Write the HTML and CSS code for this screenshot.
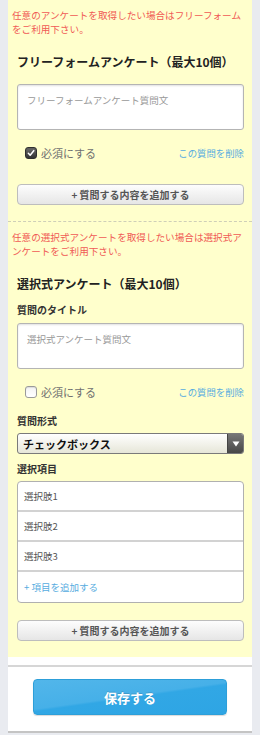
FILE: index.html
```html
<!DOCTYPE html>
<html lang="ja">
<head>
    <meta charset="UTF-8">
    <meta name="viewport" content="width=device-width, initial-scale=1.0">
    <title>アンケート設定</title>
    <link rel="stylesheet" href="styles.css">
</head>
<body>
    <div class="card">
        <section class="enquete">
            <p class="notice">任意のアンケートを取得したい場合はフリーフォームをご利用下さい。</p>
            <h2 class="enquete-title">フリーフォームアンケート（最大10個）</h2>
            <textarea class="question-text" placeholder="フリーフォームアンケート質問文"></textarea>
            <div class="question-opts">
                <label class="required">
                    <span class="check is-checked">
                        <svg width="12" height="12" viewBox="0 0 12 12"><path d="M2.8 6.3 L5 8.6 L9.3 3.2" fill="none" stroke="#fff" stroke-width="1.8" stroke-linecap="round" stroke-linejoin="round"/></svg>
                    </span>
                    必須にする
                </label>
                <a class="delete-link" href="#">この質問を削除</a>
            </div>
            <button class="add-button">+ 質問する内容を追加する</button>
        </section>

        <section class="enquete">
            <p class="notice">任意の選択式アンケートを取得したい場合は選択式アンケートをご利用下さい。</p>
            <h2 class="enquete-title title-tight">選択式アンケート（最大10個）</h2>
            <p class="field-label first">質問のタイトル</p>
            <textarea class="question-text" placeholder="選択式アンケート質問文"></textarea>
            <div class="question-opts">
                <label class="required">
                    <span class="check"></span>
                    必須にする
                </label>
                <a class="delete-link" href="#">この質問を削除</a>
            </div>
            <p class="field-label">質問形式</p>
            <div class="select-box">
                <select class="select-type">
                    <option>チェックボックス</option>
                    <option>ラジオボタン</option>
                </select>
                <span class="select-arrow">
                    <svg width="8" height="6" viewBox="0 0 8 6"><path d="M0.5 0.5 H7.5 L4 5.5 Z" fill="#fff"/></svg>
                </span>
            </div>
            <p class="field-label gap-small">選択項目</p>
            <ul class="choice-list">
                <li>選択肢1</li>
                <li>選択肢2</li>
                <li>選択肢3</li>
                <li class="choice-add">+ 項目を追加する</li>
            </ul>
            <button class="add-button add-last">+ 質問する内容を追加する</button>
        </section>

        <div class="save-area">
            <div class="save-inner">
                <button class="save-button">保存する</button>
            </div>
        </div>
    </div>
</body>
</html>
```

FILE: styles.css
```css
body {
    margin: 0;
    background-color: #e9ebf0;
    font-family: "Noto Sans CJK JP", sans-serif;
    color: #333;
}
.card {
    margin: 0 8px;
    height: 731px;
    background-color: #fff;
    border-bottom: 2px solid #c4c4c4;
}
.enquete {
    background-color: #ffffcc;
    padding: 8px 8px 16px 9px;
}
.enquete + .enquete {
    border-top: 1px dashed #cfcfb8;
}
.notice {
    margin: 0 -2px 0 -5px;
    font-size: 9.6px;
    line-height: 14px;
    color: #f05a55;
}
.enquete-title {
    margin: 18px 0 14px;
    font-size: 12px;
    line-height: 16px;
    font-weight: bold;
    color: #222;
}
.title-tight {
    margin-bottom: 11px;
}
.field-label {
    margin: 12px 0 5px;
    font-size: 10px;
    line-height: 14px;
    font-weight: bold;
    color: #333;
}
.field-label.first {
    margin: 0 0 6px;
}
.field-label.gap-small {
    margin-top: 8px;
}
.question-text {
    display: block;
    box-sizing: border-box;
    width: 100%;
    height: 46px;
    margin: 0;
    padding: 8px 9px;
    font-family: inherit;
    font-size: 9.5px;
    line-height: 14px;
    border: 1px solid #b4b4b4;
    border-radius: 3px;
    background-color: #fff;
    box-shadow: inset 0 1px 2px rgba(0, 0, 0, 0.12);
    resize: none;
}
.question-text::placeholder {
    color: #999;
}
.question-opts {
    display: flex;
    justify-content: space-between;
    align-items: center;
    height: 20px;
    margin-top: 13px;
    padding-left: 8px;
}
.required {
    display: flex;
    align-items: center;
    gap: 4px;
    font-size: 11px;
    color: #707070;
}
.check {
    display: flex;
    align-items: center;
    justify-content: center;
    box-sizing: border-box;
    width: 12px;
    height: 12px;
    border: 1px solid #9a9a9a;
    border-radius: 3px;
    background: linear-gradient(#f4f4f4, #fff);
    box-shadow: inset 0 1px 1px rgba(0, 0, 0, 0.1);
}
.check.is-checked {
    border-color: #2f2f2f;
    background: linear-gradient(#6a6a6a, #333);
}
.delete-link {
    font-size: 9.4px;
    color: #56ace0;
    text-decoration: none;
}
.add-button {
    display: block;
    box-sizing: border-box;
    width: 100%;
    height: 21px;
    margin-top: 21px;
    padding: 0;
    font-family: inherit;
    font-size: 10px;
    font-weight: bold;
    color: #555;
    border: 1px solid #bdbdbd;
    border-radius: 4px;
    background: linear-gradient(#fdfdfd, #e6e6e6);
}
.add-button.add-last {
    margin-top: 17px;
}
.select-box {
    display: flex;
    box-sizing: border-box;
    height: 21px;
    border: 1px solid #7a7a7a;
    border-radius: 3px;
    overflow: hidden;
    background: linear-gradient(#ffffff, #e6e6d8);
}
.select-type {
    flex: 1;
    appearance: none;
    -webkit-appearance: none;
    margin: 0;
    padding: 0 0 0 5px;
    border: none;
    background: transparent;
    font-family: inherit;
    font-size: 11px;
    font-weight: bold;
    color: #111;
}
.select-arrow {
    display: flex;
    align-items: center;
    justify-content: center;
    width: 15px;
    border-left: 1px solid #444;
    background: linear-gradient(#777, #474747);
}
.choice-list {
    margin: 0;
    padding: 0;
    list-style: none;
    border: 1px solid #b0b0b0;
    border-radius: 4px;
    background-color: #fff;
    overflow: hidden;
}
.choice-list li {
    display: flex;
    align-items: center;
    height: 28px;
    padding: 0 6px;
    font-size: 9.5px;
    color: #555;
    border-bottom: 2px solid #d2d2d2;
}
.choice-list .choice-add {
    height: 30px;
    border-bottom: none;
    color: #56ace0;
}
.save-area {
    padding-top: 8px;
}
.save-inner {
    display: flex;
    justify-content: center;
    padding: 12px 0 16px;
    border-top: 2px solid #d6d6d6;
}
.save-button {
    width: 194px;
    height: 36px;
    font-family: inherit;
    font-size: 13px;
    font-weight: bold;
    color: #fff;
    text-shadow: 0 -1px 0 rgba(0, 0, 0, 0.15);
    border: 1px solid #2d9fd9;
    border-radius: 4px;
    background: linear-gradient(172deg, #52b6ea 0%, #46b0e8 48%, #31a7e5 52%, #2ea5e4 100%);
    box-shadow: 0 1px 1px rgba(0, 0, 0, 0.15);
}
```
